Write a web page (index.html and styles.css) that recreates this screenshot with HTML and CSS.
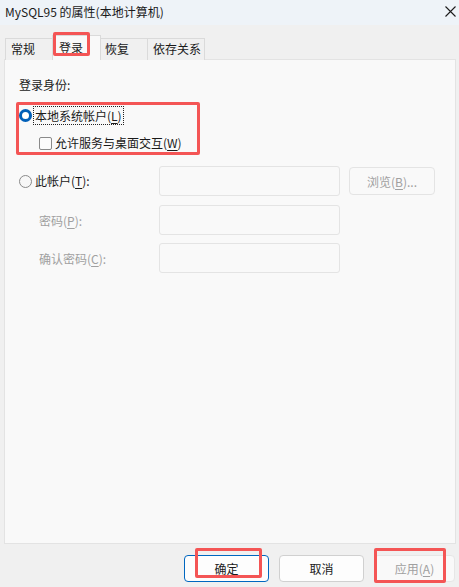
FILE: index.html
```html
<!DOCTYPE html>
<html lang="zh-CN">
<head>
<meta charset="utf-8">
<title>MySQL95 的属性(本地计算机)</title>
<link rel="stylesheet" href="styles.css">
</head>
<body>
<div class="window">
  <div class="titlebar">
    <span class="title">MySQL95 的属性(本地计算机)</span>
    <svg class="close" width="11" height="11" viewBox="0 0 11 11"><path d="M0.5 0.5 L10.5 10.5 M10.5 0.5 L0.5 10.5" stroke="#1b1b1b" stroke-width="1.1" fill="none"/></svg>
  </div>
  <div class="tabs">
    <div class="tab t1">常规</div>
    <div class="tab t2 active">登录</div>
    <div class="tab t3">恢复</div>
    <div class="tab t4">依存关系</div>
  </div>
  <div class="panel">
    <div class="section-label">登录身份:</div>
    <div class="row opt-row">
      <span class="radio checked"></span>
      <span class="focus">本地系统帐户(<u>L</u>)</span>
    </div>
    <div class="row chk-row">
      <span class="checkbox"></span>
      <span class="lbl">允许服务与桌面交互(<u>W</u>)</span>
    </div>
    <div class="form">
      <div class="frow first">
        <div class="fl"><span class="radio"></span><span class="lbl">此帐户(<u>T</u>):</span></div>
        <div class="input"></div>
        <div class="btn browse">浏览(<u>B</u>)...</div>
      </div>
      <div class="frow second">
        <div class="fl dis">密码(<u>P</u>):</div>
        <div class="input"></div>
      </div>
      <div class="frow third">
        <div class="fl dis">确认密码(<u>C</u>):</div>
        <div class="input"></div>
      </div>
    </div>
  </div>
  <div class="footer">
    <div class="fbtn default">确定</div>
    <div class="fbtn">取消</div>
    <div class="fbtn disabled">应用(<u>A</u>)</div>
  </div>

  <div class="mark m1"></div>
  <div class="mark m2"></div>
  <div class="mark m3"></div>
  <div class="mark m4"></div>
</div>
</body>
</html>
```

FILE: styles.css
```css
* { box-sizing: border-box; }
html, body { margin: 0; padding: 0; }
body {
  font-family: "Noto Sans CJK SC", "Noto Sans", sans-serif;
  font-size: 12px;
  color: #1a1a1a;
  background: #f0f0f0;
}
.window {
  position: relative;
  width: 459px;
  height: 587px;
  background: #f0f0f0;
  display: flex;
  flex-direction: column;
  overflow: hidden;
}
.titlebar {
  height: 25px;
  background: #eef3f8;
  display: flex;
  align-items: center;
  justify-content: space-between;
  padding: 0 3px 1px 5px;
}
.title { line-height: 16px; color: #1a1a1a; }
.close { margin-right: 0; margin-top: -1px; }

.tabs {
  display: flex;
  align-items: flex-end;
  height: 35px;
  padding-left: 5px;
  position: relative;
  z-index: 1;
  margin-bottom: -1px;
}
.tab {
  height: 22px;
  line-height: 20px;
  padding-left: 5px;
  border: 1px solid #dadada;
  border-right: none;
  border-bottom: none;
  background: #f0f0f0;
  white-space: nowrap;
}
.t1 { width: 47px; }
.t2 { width: 49px; }
.t3 { width: 47px; }
.t4 { width: 58px; border-right: 1px solid #dadada; }
.tab.active {
  height: 25px;
  line-height: 24px;
  padding-left: 6px;
  background: #f9f9f9;
  border-right: 1px solid #dadada;
  margin-right: -1px;
  position: relative;
}
.t3 { border-left: none; }

.panel {
  margin: 0 3px 0 4px;
  height: 485px;
  background: #f9f9f9;
  border: 1px solid #e3e3e3;
  padding: 0 0 0 14px;
}
.section-label {
  margin-top: 17px;
  height: 16px;
  line-height: 16px;
}
.row {
  display: flex;
  align-items: center;
  height: 20px;
}
.opt-row { margin-top: 12px; }
.chk-row { margin-top: 8px; padding-left: 20px; }
.radio {
  width: 13px;
  height: 13px;
  border-radius: 50%;
  border: 1px solid #8a8a8a;
  background: #f7f7f7;
  flex: none;
  margin-right: 3px;
}
.radio.checked {
  border: 3.5px solid #005fb8;
  background: #ffffff;
}
.focus {
  outline: 1px dotted #222;
  outline-offset: 0;
  line-height: 17px;
  margin-left: -1px;
  padding: 0 1px;
}
.checkbox {
  width: 13px;
  height: 13px;
  border: 1px solid #8a8a8a;
  border-radius: 2px;
  background: #fbfbfb;
  margin-right: 3px;
  flex: none;
}
.lbl { line-height: 16px; }
u { text-decoration: underline; text-underline-offset: 2px; }

.form { margin-top: 13px; }
.frow {
  display: grid;
  grid-template-columns: 131px 181px 86px;
  column-gap: 9px;
  align-items: center;
  height: 30px;
}
.second { margin-top: 9px; }
.third { margin-top: 8px; }
.fl { display: flex; align-items: center; }
.fl.dis { color: #a0a0a0; padding-left: 20px; }
.input {
  height: 30px;
  border: 1px solid #e4e4e4;
  border-radius: 3px;
  background: #f9f9f9;
}
.btn.browse {
  height: 28px;
  border: 1px solid #e4e4e4;
  border-radius: 4px;
  background: #f9f9f9;
  color: #a0a0a0;
  display: flex;
  align-items: center;
  justify-content: center;
}

.footer {
  display: flex;
  justify-content: flex-end;
  gap: 10px;
  padding: 11px 4px 0 0;
}
.fbtn {
  width: 85px;
  height: 27px;
  border: 1px solid #d0d0d0;
  border-radius: 4px;
  background: #fdfdfd;
  display: flex;
  align-items: center;
  justify-content: center;
  color: #1a1a1a;
}
.fbtn.default { border: 1px solid #0067c0; }
.fbtn.disabled { width: 81px; color: #a0a0a0; border-color: #e6e6e6; background: #f9f9f9; }

.mark {
  position: absolute;
  border: 3px solid #f45555;
  border-radius: 2px;
  z-index: 5;
}
.m1 { left: 53px; top: 32px; width: 37px; height: 24px; }
.m2 { left: 16px; top: 102px; width: 184px; height: 53px; }
.m3 { left: 195px; top: 548px; width: 67px; height: 30px; }
.m4 { left: 374px; top: 548px; width: 72px; height: 35px; }
```
